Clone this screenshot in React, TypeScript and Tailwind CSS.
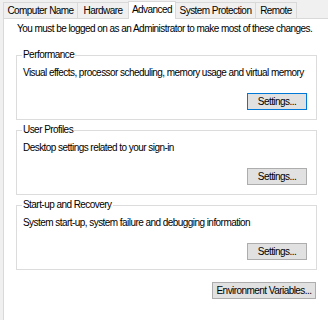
import React from 'react';

const tabs = [
    { name: 'Computer Name', w: 'w-[75px]' },
    { name: 'Hardware', w: 'w-[52px]' },
    { name: 'Advanced', w: 'w-[48px]' },
    { name: 'System Protection', w: 'w-[81px]' },
    { name: 'Remote', w: 'w-[42px]' },
];

function Button({ label, focused, className }: { label: string; focused?: boolean; className?: string }) {
    return (
        <div
            className={`h-[17px] flex items-center justify-center whitespace-nowrap bg-[#e1e1e1] border ${
                focused ? 'border-[#0078d7]' : 'border-[#adadad]'
            } ${className ?? ''}`}
        >
            {label}
        </div>
    );
}

function Group({ title, text, focused }: { title: string; text: string; focused?: boolean }) {
    return (
        <div className="relative h-[65px] border border-[#dcdcdc] pl-[6px] pr-[9px] pt-[10px]">
            <span className="absolute left-[5px] top-[-8px] bg-white px-[1px] leading-[14px] whitespace-nowrap">{title}</span>
            <div className="leading-[14px] whitespace-nowrap">{text}</div>
            <div className="flex justify-end mt-[13px]">
                <Button label="Settings..." focused={focused} className="w-[60px]" />
            </div>
        </div>
    );
}

export default function App() {
    return (
        <div
            className="w-[328px] h-[320px] bg-[#f0f0f0] flex flex-col overflow-hidden text-[10px] tracking-[-0.55px] text-black"
            style={{ fontFamily: '"Liberation Sans", Arial, sans-serif' }}
        >
            <div className="flex items-end h-[18px] pl-[3px]">
                {tabs.map(t =>
                    t.name === 'Advanced' ? (
                        <div
                            key={t.name}
                            className={`${t.w} h-[18px] -ml-[1px] bg-white border-l border-r border-t border-[#d9d9d9] -mb-[1px] z-10 flex justify-center pt-[1px] leading-[14px] whitespace-nowrap`}
                        >
                            {t.name}
                        </div>
                    ) : (
                        <div
                            key={t.name}
                            className={`${t.w} h-[16px] bg-[#f0f0f0] border-l border-t border-r border-[#d9d9d9] -ml-[1px] first:ml-0 flex items-center justify-center whitespace-nowrap`}
                        >
                            {t.name}
                        </div>
                    )
                )}
            </div>
            <div className="flex-1 ml-[3px] bg-white border-l border-t border-[#d9d9d9] pl-[12px] pr-[11px] pt-[3px]">
                <div className="leading-[14px] pl-[1px] whitespace-nowrap">
                    You must be logged on as an Administrator to make most of these changes.
                </div>
                <div className="flex flex-col gap-[10px] mt-[19px]">
                    <Group title="Performance" text="Visual effects, processor scheduling, memory usage and virtual memory" focused />
                    <Group title="User Profiles" text="Desktop settings related to your sign-in" />
                    <Group title="Start-up and Recovery" text="System start-up, system failure and debugging information" />
                </div>
                <div className="flex justify-end mt-[12px] pr-[1px]">
                    <Button label="Environment Variables..." className="w-[104px]" />
                </div>
            </div>
        </div>
    );
}
